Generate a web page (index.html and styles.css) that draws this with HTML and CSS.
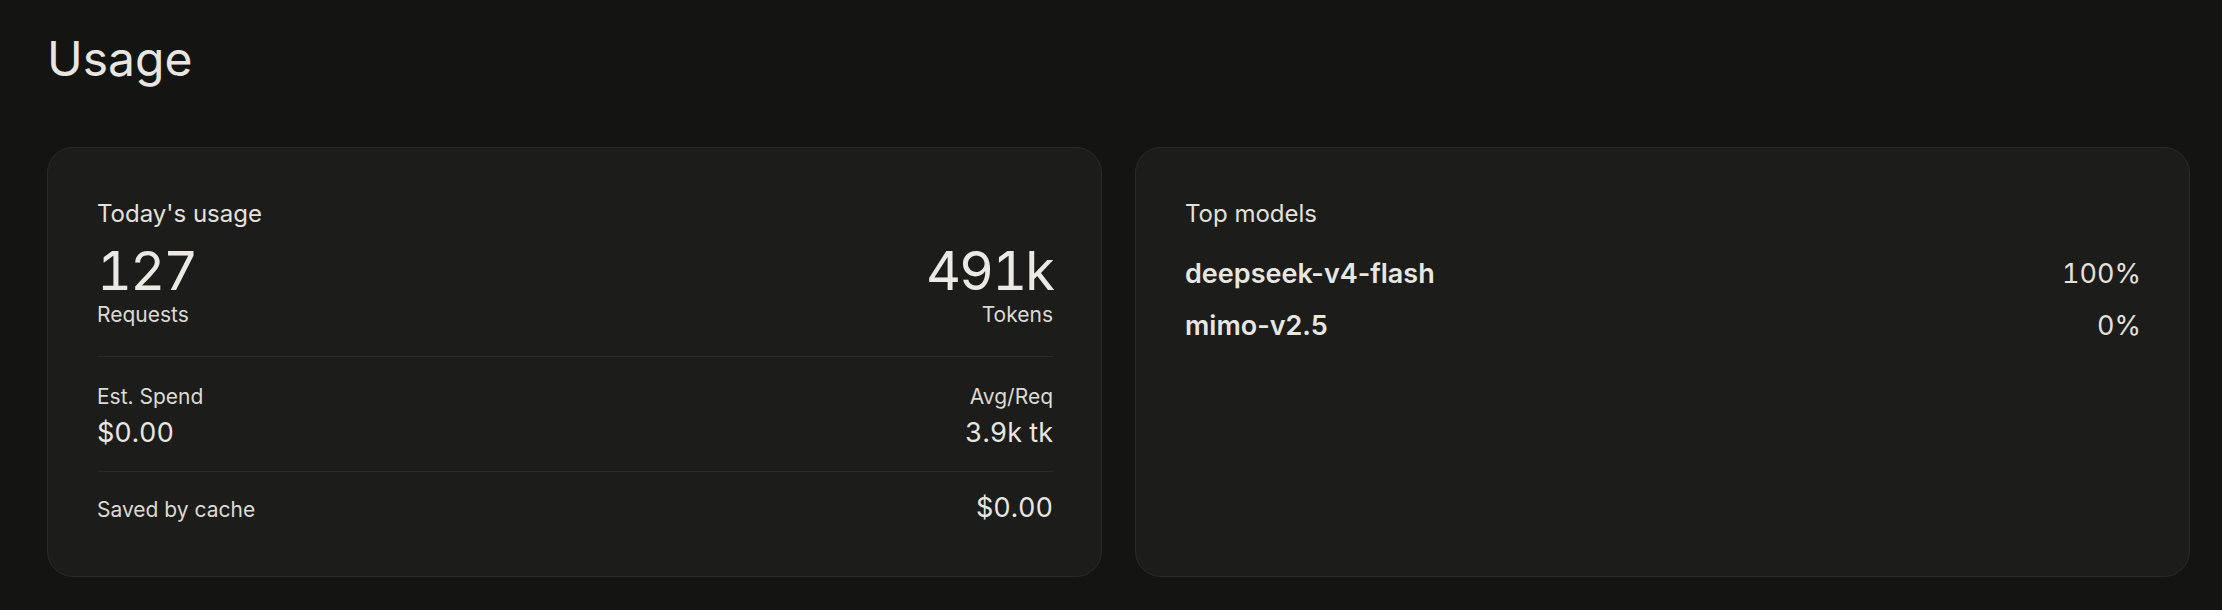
FILE: index.html
```html
<!DOCTYPE html>
<html lang="en">
<head>
<meta charset="utf-8">
<title>Usage</title>
<link rel="stylesheet" href="styles.css">
</head>
<body>
<main class="page">
  <h1 class="title">Usage</h1>
  <div class="grid">
    <section class="card">
      <div class="sec sec-top">
        <div class="label">Today's usage</div>
        <div class="stats">
          <div class="stat">
            <div class="big">127</div>
            <div class="sub">Requests</div>
          </div>
          <div class="stat right">
            <div class="big">491k</div>
            <div class="sub">Tokens</div>
          </div>
        </div>
      </div>
      <div class="sec sec-mid">
        <div class="stat">
          <div class="sub">Est. Spend</div>
          <div class="val">$0.00</div>
        </div>
        <div class="stat right">
          <div class="sub">Avg/Req</div>
          <div class="val">3.9k tk</div>
        </div>
      </div>
      <div class="sec sec-bot">
        <div class="sub">Saved by cache</div>
        <div class="val">$0.00</div>
      </div>
    </section>
    <section class="card">
      <div class="label">Top models</div>
      <ul class="models">
        <li class="model"><span class="mname">deepseek-v4-flash</span><span class="mpct">100%</span></li>
        <li class="model"><span class="mname">mimo-v2.5</span><span class="mpct">0%</span></li>
      </ul>
    </section>
  </div>
</main>
</body>
</html>
```

FILE: styles.css
```css
* { box-sizing: border-box; }
html, body {
  margin: 0;
  padding: 0;
  background: #141413;
  color: #e8e6e1;
  font-family: Inter, "Noto Sans", sans-serif;
}
.page {
  padding: 29px 32px 0 47px;
}
.title {
  margin: 0 0 58px 0;
  font-size: 48px;
  line-height: 60px;
  font-weight: 400;
  color: #e8e6e1;
}
.grid {
  display: grid;
  grid-template-columns: 1fr 1fr;
  gap: 33px;
}
.card {
  background: #1c1c1b;
  border: 1px solid #2a2a29;
  border-radius: 26px;
  padding: 48px 48px 48px 49px;
}
.label {
  font-size: 24px;
  line-height: 36px;
  color: #e3e1dc;
}
.stats {
  display: flex;
  justify-content: space-between;
  margin-top: 12px;
}
.stat { display: flex; flex-direction: column; }
.stat.right { align-items: flex-end; text-align: right; }
.big {
  font-size: 54px;
  line-height: 54px;
  color: #ebe9e4;
  font-variant-numeric: tabular-nums;
  letter-spacing: -0.035em;
}
.sub {
  font-size: 21px;
  line-height: 31.5px;
  color: #dcdad5;
}
.big + .sub { margin-top: 1px; }
.val {
  font-size: 27px;
  line-height: 40.5px;
  color: #e8e6e1;
  font-variant-numeric: tabular-nums;
}
.sec-top { padding-bottom: 25px; border-bottom: 1px solid #2a2a29; }
.sec-mid {
  display: flex;
  justify-content: space-between;
  padding: 24px 0 17px;
  border-bottom: 1px solid #2a2a29;
}
.sec-mid .val { margin-top: 1px; }
.sec-bot {
  display: flex;
  justify-content: space-between;
  align-items: baseline;
  padding-top: 16px;
}
.models {
  list-style: none;
  margin: 22px 0 0;
  padding: 0;
  display: flex;
  flex-direction: column;
  gap: 12px;
}
.model {
  display: flex;
  justify-content: space-between;
  align-items: baseline;
  font-size: 27px;
  line-height: 40px;
}
.mname { font-weight: 600; color: #e8e6e1; }
.mpct { color: #e3e1dc; font-variant-numeric: tabular-nums; }
```
